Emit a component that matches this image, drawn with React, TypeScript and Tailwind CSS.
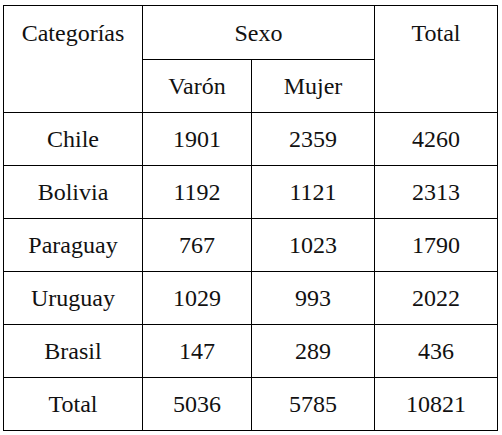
import React from "react";

const rows: [string, string, string, string][] = [
  ["Chile", "1901", "2359", "4260"],
  ["Bolivia", "1192", "1121", "2313"],
  ["Paraguay", "767", "1023", "1790"],
  ["Uruguay", "1029", "993", "2022"],
  ["Brasil", "147", "289", "436"],
  ["Total", "5036", "5785", "10821"],
];

export default function App() {
  const cell = "bg-white flex items-center justify-center font-['Liberation_Serif']";
  return (
    <div className="w-[502px] h-[435px] bg-white pl-[3px] pt-[5px] text-[24px] text-[#111] font-serif">
      <div className="grid w-[495px] grid-cols-[138px_108px_122px_122px] grid-rows-[53px_52px_52px_52px_52px_52px_52px_52px] gap-px border border-black bg-black">
        <div className="row-span-2 bg-white flex flex-col">
          <div className="h-[53px] flex items-center justify-center font-['Liberation_Serif']">Categorías</div>
        </div>
        <div className={`col-span-2 ${cell}`}>Sexo</div>
        <div className="row-span-2 bg-white flex flex-col">
          <div className="h-[53px] flex items-center justify-center font-['Liberation_Serif']">Total</div>
        </div>
        <div className={cell}>Varón</div>
        <div className={cell}>Mujer</div>
        {rows.map((r) =>
          r.map((c, i) => (
            <div key={r[0] + i} className={cell}>
              {c}
            </div>
          ))
        )}
      </div>
    </div>
  );
}
